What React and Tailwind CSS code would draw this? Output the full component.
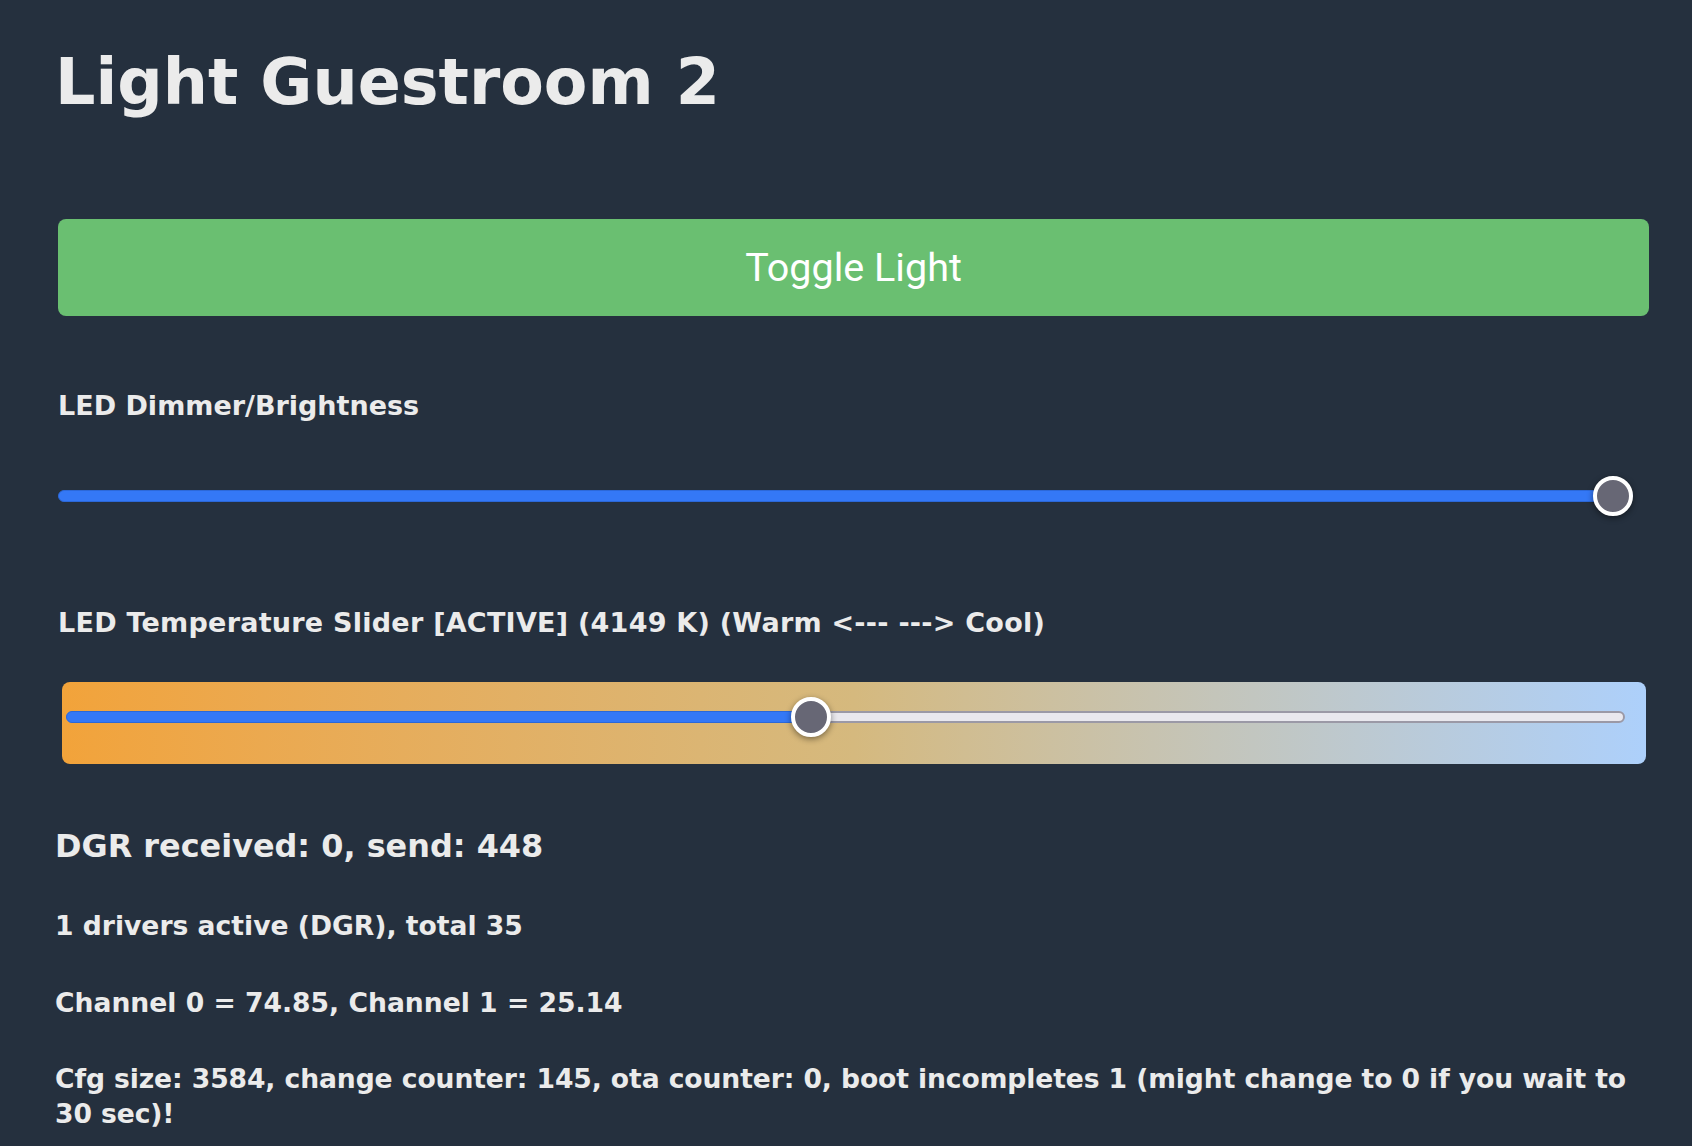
export default function App() {
  return (
    <div className="min-h-screen bg-[#25303e] text-[#ebebeb] font-['DejaVu_Sans',Verdana,sans-serif] font-bold pl-[55px] pr-[43px] pt-[45px] pb-[20px]">
      <h1 className="text-[63.5px] leading-[75px] font-bold">Light Guestroom 2</h1>

      <div className="pl-[3px]">
        <button className="mt-[99px] w-full h-[97px] rounded-[8px] bg-[#6abf71] text-white font-['Roboto',sans-serif] font-normal text-[39.5px] leading-none flex items-center justify-center">
          Toggle Light
        </button>

        <div className="mt-[72px] text-[27px] leading-[35px]">LED Dimmer/Brightness</div>

        <div className="mt-[53px] mr-[16px] h-[40px] relative flex items-center">
          <div className="w-full h-[12px] rounded-full bg-[#3478f6] border border-[#2c68d8]"></div>
          <div className="absolute right-0 top-0 w-[40px] h-[40px] rounded-full bg-[#676775] border-[4px] border-white shadow-[0_2px_6px_rgba(0,0,0,0.45)]"></div>
        </div>

        <div className="mt-[89px] text-[27px] leading-[35px] tracking-[0.25px]">
          LED Temperature Slider [ACTIVE] (4149 K) (Warm &lt;--- ---&gt; Cool)
        </div>

        <div className="mt-[42px] ml-[4px] mr-[3px] h-[82px] rounded-[8px] bg-gradient-to-r from-[#f2a33a] via-[#d5b97e] to-[#add0fb] pt-[29px] pl-[4px] pr-[21px]">
          <div className="relative h-[12px]">
            <div className="absolute inset-0 rounded-full bg-[#e9e8ee] border-[2px] border-[#9b99a6]"></div>
            <div className="absolute left-0 top-0 h-[12px] w-[745px] rounded-l-full bg-[#3478f6] border border-[#2c68d8]"></div>
            <div className="absolute left-[725px] top-[-14px] w-[40px] h-[40px] rounded-full bg-[#676775] border-[4px] border-white shadow-[0_2px_6px_rgba(0,0,0,0.45)]"></div>
          </div>
        </div>
      </div>

      <h3 className="mt-[62px] text-[31.9px] leading-[40px] font-bold">DGR received: 0, send: 448</h3>
      <p className="mt-[42px] text-[26.6px] leading-[35px]">1 drivers active (DGR), total 35</p>
      <p className="mt-[42px] text-[26.6px] leading-[35px]">Channel 0 = 74.85, Channel 1 = 25.14</p>
      <p className="mt-[41px] text-[26.6px] leading-[35px] tracking-[-0.1px]">
        Cfg size: 3584, change counter: 145, ota counter: 0, boot incompletes 1 (might change to 0 if you wait to 30 sec)!
      </p>
    </div>
  );
}
